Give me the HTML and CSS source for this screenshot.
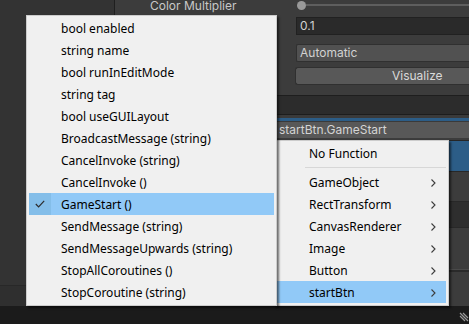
FILE: index.html
```html
<!DOCTYPE html>
<html>
<head>
    <meta charset="utf-8" />
    <title>Inspector</title>
    <link rel="stylesheet" href="styles.css">
</head>
<body>
    <div class="editor">
        <div class="hierarchy">
            <div class="hierarchy-rest"></div>
            <div class="hierarchy-foot"></div>
        </div>
        <div class="inspector">
            <div class="prop prop-first">
                <div class="prop-label">Color Multiplier</div>
                <div class="slider">
                    <div class="slider-knob"></div>
                    <div class="slider-track"></div>
                </div>
            </div>
            <div class="prop prop-field">
                <div class="prop-label"></div>
                <div class="field">0.1</div>
            </div>
            <div class="prop prop-popup">
                <div class="prop-label"></div>
                <div class="popup">Automatic</div>
            </div>
            <div class="prop prop-button">
                <div class="prop-label"></div>
                <div class="button">Visualize</div>
            </div>
            <div class="event-header"></div>
            <div class="event-top">
                <div class="event-accent"></div>
            </div>
            <div class="event-field">startBtn.GameStart</div>
            <div class="event-selected"></div>
            <div class="event-row"></div>
            <div class="event-row event-row-dark"></div>
            <div class="event-row event-row-tall"></div>
            <div class="event-foot"></div>
        </div>
    </div>
    <div class="statusbar">
        <svg class="grip" width="10" height="14" viewBox="0 0 10 14">
            <path d="M1 3 L9 11 M4 3 L9 8 M1 6 L6 11" stroke="#9a9a9a" stroke-width="1.2" fill="none"/>
        </svg>
    </div>

    <div class="menu menu-components">
        <div class="menu-item">No Function</div>
        <div class="menu-sep"></div>
        <div class="menu-item has-sub">GameObject<svg class="chev" width="5" height="8" viewBox="0 0 5 8"><path d="M0.5 0.5 L4 4 L0.5 7.5" stroke="#3c3c3c" stroke-width="1.1" fill="none"/></svg></div>
        <div class="menu-item has-sub">RectTransform<svg class="chev" width="5" height="8" viewBox="0 0 5 8"><path d="M0.5 0.5 L4 4 L0.5 7.5" stroke="#3c3c3c" stroke-width="1.1" fill="none"/></svg></div>
        <div class="menu-item has-sub">CanvasRenderer<svg class="chev" width="5" height="8" viewBox="0 0 5 8"><path d="M0.5 0.5 L4 4 L0.5 7.5" stroke="#3c3c3c" stroke-width="1.1" fill="none"/></svg></div>
        <div class="menu-item has-sub">Image<svg class="chev" width="5" height="8" viewBox="0 0 5 8"><path d="M0.5 0.5 L4 4 L0.5 7.5" stroke="#3c3c3c" stroke-width="1.1" fill="none"/></svg></div>
        <div class="menu-item has-sub">Button<svg class="chev" width="5" height="8" viewBox="0 0 5 8"><path d="M0.5 0.5 L4 4 L0.5 7.5" stroke="#3c3c3c" stroke-width="1.1" fill="none"/></svg></div>
        <div class="menu-item has-sub aktív">startBtn<svg class="chev" width="5" height="8" viewBox="0 0 5 8"><path d="M0.5 0.5 L4 4 L0.5 7.5" stroke="#3c3c3c" stroke-width="1.1" fill="none"/></svg></div>
    </div>

    <div class="menu menu-methods">
        <div class="menu-item">bool enabled</div>
        <div class="menu-item">string name</div>
        <div class="menu-item">bool runInEditMode</div>
        <div class="menu-item">string tag</div>
        <div class="menu-item">bool useGUILayout</div>
        <div class="menu-item">BroadcastMessage (string)</div>
        <div class="menu-item">CancelInvoke (string)</div>
        <div class="menu-item">CancelInvoke ()</div>
        <div class="menu-item aktív checked">
            <span class="check"><svg width="10" height="8" viewBox="0 0 10 8"><path d="M0.8 4 L3.6 6.8 L9.2 0.8" stroke="#2b2b2b" stroke-width="1.2" fill="none"/></svg></span>GameStart ()
        </div>
        <div class="menu-item">SendMessage (string)</div>
        <div class="menu-item">SendMessageUpwards (string)</div>
        <div class="menu-item">StopAllCoroutines ()</div>
        <div class="menu-item">StopCoroutine (string)</div>
    </div>
</body>
</html>
```

FILE: styles.css
```css
html, body {
    margin: 0;
    height: 100%;
    overflow: hidden;
    background-color: #383838;
    font-family: Inter, 'Noto Sans', sans-serif;
    font-size: 12px;
}

.editor {
    display: flex;
    height: 306px;
}

.hierarchy {
    width: 114px;
    border-right: 1px solid #1f1f1f;
    display: flex;
    flex-direction: column;
    background-color: #333333;
}

.hierarchy-rest {
    flex-grow: 1;
}

.hierarchy-foot {
    height: 20px;
    border-top: 1px solid #282828;
    background-color: #2f2f2f;
}

.inspector {
    flex-grow: 1;
    display: flex;
    flex-direction: column;
    background-color: #3c3c3c;
}

/* property rows */
.prop {
    display: grid;
    grid-template-columns: 181px 1fr;
    height: 18px;
    align-items: center;
}

.prop-first {
    margin-top: -4px;
    height: 18px;
}

.prop-field {
    margin-top: 3px;
}

.prop-popup {
    margin-top: 9px;
}

.prop-button {
    margin-top: 5px;
}

.prop-label {
    padding-left: 35px;
    color: #c8c8c8;
    white-space: nowrap;
}

.slider {
    display: flex;
    align-items: center;
    padding-left: 1px;
}

.slider-knob {
    width: 9px;
    height: 9px;
    border-radius: 50%;
    background-color: #999999;
    flex-shrink: 0;
}

.slider-track {
    flex-grow: 1;
    height: 2px;
    background-color: #5e5e5e;
}

.field {
    height: 16px;
    line-height: 16px;
    padding-left: 3px;
    background-color: #2a2a2a;
    border: 1px solid #212121;
    border-right: none;
    color: #d2d2d2;
}

.popup {
    height: 16px;
    line-height: 16px;
    padding-left: 3px;
    background-color: #515151;
    border: 1px solid #303030;
    border-right: none;
    border-radius: 2px 0 0 2px;
    color: #d2d2d2;
}

.button {
    height: 16px;
    line-height: 16px;
    padding-left: 96px;
    background-color: #585858;
    border: 1px solid #303030;
    border-right: none;
    border-radius: 3px 0 0 3px;
    color: #dadada;
    margin-left: -1px;
}

/* event list */
.event-header {
    margin-top: 10px;
    height: 18px;
    border-top: 1px solid #1e1e1e;
    background-color: #2c2c2c;
    border-bottom: 1px solid #1d1d1d;
}

.event-top {
    height: 7px;
    background-color: #3a3a3a;
    display: flex;
    flex-direction: column;
    justify-content: flex-end;
}

.event-accent {
    height: 3px;
    margin-bottom: 1px;
    background-color: #2c5d87;
}

.event-field {
    height: 16px;
    line-height: 16px;
    padding-left: 164px;
    background-color: #585858;
    color: #d4d4d4;
    white-space: nowrap;
}

.event-selected {
    height: 30px;
    margin-top: 2px;
    border-top: 1px solid #262626;
    background-color: #2c5d87;
}

.event-row {
    height: 29px;
    border-top: 1px solid #282828;
    border-bottom: 1px solid #282828;
}

.event-row-dark {
    height: 25px;
    background-color: #2e2e2e;
    border-top: none;
}

.event-row-tall {
    height: 41px;
    border: none;
}

.event-foot {
    flex-grow: 1;
    border-top: 1px solid #4a4a4a;
    box-shadow: inset 0 2px 0 #2a2a2a;
}

.statusbar {
    height: 18px;
    background-color: #1b1b1b;
    display: flex;
    justify-content: flex-end;
    align-items: flex-end;
}

.grip {
    margin-right: 0;
}

/* popup menus */
.menu {
    position: absolute;
    box-sizing: border-box;
    background-color: #f0f0f0;
    border: 1px solid #cccccc;
    padding: 1px 2px 2px 2px;
    font-family: 'Noto Sans', 'Open Sans', sans-serif;
    font-size: 12px;
    color: #000000;
    box-shadow: 2px 2px 2px rgba(0,0,0,0.55);
}

.menu-methods {
    left: 26px;
    top: 15px;
    width: 251px;
    height: 291px;
}

.menu-components {
    left: 274px;
    top: 140px;
    width: 175px;
    height: 166px;
}

.menu-item {
    display: flex;
    align-items: center;
    height: 22px;
    padding-left: 32px;
    padding-right: 10px;
    white-space: nowrap;
    position: relative;
}

.has-sub {
    justify-content: space-between;
}

.chev {
    margin-top: 1px;
}

.menu-sep {
    height: 7px;
    margin-left: 28px;
    display: flex;
    align-items: center;
}

.menu-sep::after {
    content: "";
    flex-grow: 1;
    height: 1px;
    background-color: #d7d7d7;
}

.aktív {
    background-color: #91c9f7;
}

.check {
    position: absolute;
    left: 0;
    top: 0;
    width: 22px;
    height: 22px;
    display: flex;
    align-items: center;
    justify-content: center;
    background-color: #84bee9;
}
```
